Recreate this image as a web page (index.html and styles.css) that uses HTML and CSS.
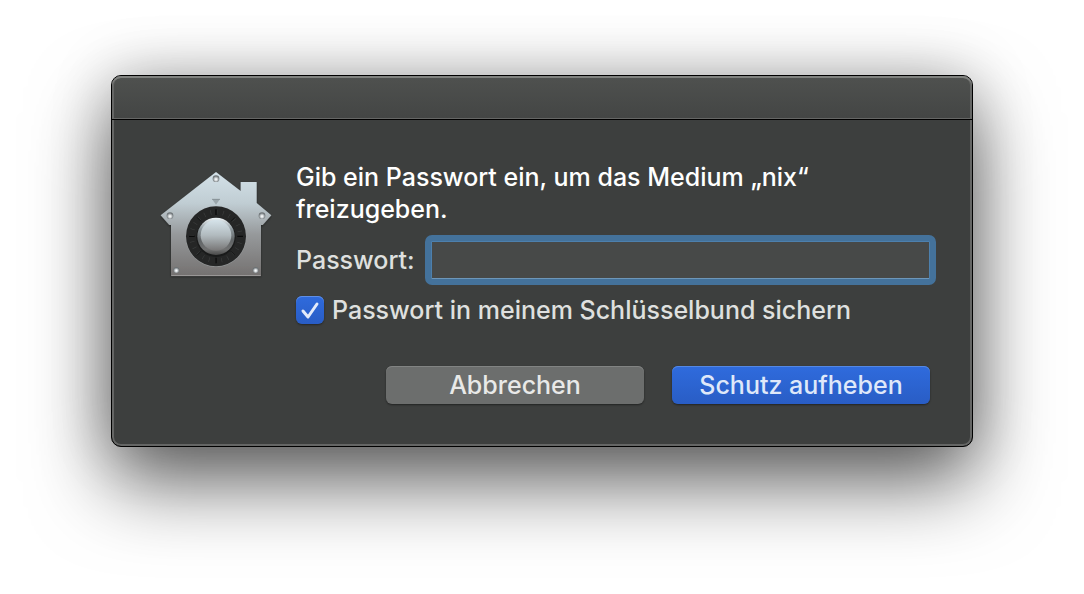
FILE: index.html
```html
<!DOCTYPE html>
<html lang="de">
<head>
<meta charset="utf-8">
<meta name="viewport" content="width=device-width, initial-scale=1">
<title>Passwort eingeben</title>
<link rel="stylesheet" href="styles.css">
</head>
<body>
<main class="dialog" role="dialog" aria-labelledby="prompt">
  <header class="titlebar"></header>
  <form class="content">
    <svg class="vault" viewBox="30 30 336 330" aria-hidden="true">
      <defs>
        <linearGradient id="metal" x1="0" y1="0" x2="0" y2="1">
          <stop offset="0" stop-color="#d3e1e8"/>
          <stop offset=".3" stop-color="#c0cdd3"/>
          <stop offset=".6" stop-color="#96999b"/>
          <stop offset="1" stop-color="#747170"/>
        </linearGradient>
        <linearGradient id="knob" x1="0" y1="0" x2="0" y2="1">
          <stop offset="0" stop-color="#d5e3ea"/>
          <stop offset=".5" stop-color="#b1babe"/>
          <stop offset="1" stop-color="#777676"/>
        </linearGradient>
        <linearGradient id="rim" x1="0" y1="0" x2="0" y2="1">
          <stop offset="0" stop-color="#f0f6f9"/>
          <stop offset=".3" stop-color="#8e989d"/>
          <stop offset=".6" stop-color="#606466"/>
          <stop offset=".85" stop-color="#707171"/>
          <stop offset="1" stop-color="#494949"/>
        </linearGradient>
        <radialGradient id="screw" cx=".5" cy=".6" r=".5">
          <stop offset="0" stop-color="#ffffff"/>
          <stop offset=".35" stop-color="#dfe3e5"/>
          <stop offset=".8" stop-color="#8d9396"/>
          <stop offset="1" stop-color="#6c7275"/>
        </radialGradient>
        <filter id="soft" x="-10%" y="-10%" width="120%" height="120%">
          <feDropShadow dx="0" dy="3" stdDeviation="3" flood-opacity=".45"/>
        </filter>
      </defs>
      <path filter="url(#soft)" fill="url(#metal)" d="M198 36 272 93V66H320V129L364 166 338 195H333V348H63V195H58L32 166Z"/>
      <path fill="none" stroke="#b5b5b5" stroke-width="2" d="M64 347H332"/>
      <path fill="#9aa6ab" d="M186 117H210L198 134Z"/>
      <path fill="none" stroke="#7d888d" stroke-width="2" d="M186 118H210"/>
      <circle cx="198" cy="230" r="91" fill="#b0b5b7" opacity=".45"/>
      <circle cx="198" cy="229" r="90" fill="#252626"/>
      <circle cx="198" cy="229" r="73" fill="none" stroke="#3b3d3d" stroke-width="14" stroke-dasharray="2 17.11"/>
      <g stroke="#090a0a" stroke-width="4">
        <path d="M198 148V165M198 293V310M117 229H134M262 229H279"/>
        <path stroke-width="2" d="M141 172 153 184M255 172 243 184M141 286 153 274M255 286 243 274"/>
      </g>
      <circle cx="198" cy="232" r="59" fill="#191a1a"/>
      <circle cx="198" cy="229" r="56" fill="url(#rim)"/>
      <circle cx="198" cy="226" r="46" fill="url(#knob)"/>
      <g fill="url(#screw)">
        <circle cx="198" cy="56" r="10"/>
        <circle cx="60" cy="167" r="10"/>
        <circle cx="336" cy="167" r="10"/>
        <circle cx="79" cy="330" r="9"/>
        <circle cx="317" cy="330" r="9"/>
      </g>
    </svg>
    <div class="fields">
      <p class="prompt" id="prompt">Gib ein Passwort ein, um das Medium „nix“ freizugeben.</p>
      <div class="password-row">
        <label for="password">Passwort:</label>
        <input class="password" id="password" type="password">
      </div>
      <div class="save-row">
        <span class="tick">
          <input class="tick-box" id="save" type="checkbox" checked>
          <svg class="tick-mark" viewBox="0 0 28 28" aria-hidden="true"><path d="M7 15 12 21 21 8"/></svg>
        </span>
        <label for="save">Passwort in meinem Schlüsselbund sichern</label>
      </div>
      <div class="actions">
        <button class="button" type="button">Abbrechen</button>
        <button class="button button-default" type="submit">Schutz aufheben</button>
      </div>
    </div>
  </form>
</main>
</body>
</html>
```
FILE: styles.css
```css
* {
  box-sizing: border-box;
}

body {
  min-height: 100vh;
  margin: 0;
  padding: 75px 111px;
  background: #fff;
  color: #dfe0df;
  font-family: Inter, "Liberation Sans", sans-serif;
  font-size: 25px;
  font-weight: 500;
  line-height: 32px;
}

.dialog {
  border: 1px solid #000;
  border-radius: 10px;
  background: #3d3f3e;
  box-shadow:
    inset 0 0 0 2px #656665,
    0 36px 80px rgba(0, 0, 0, .6),
    0 0 60px rgba(0, 0, 0, .22);
}

.titlebar {
  height: 44px;
  border-radius: 9px 9px 0 0;
  background: linear-gradient(#4f514f, #434544);
  box-shadow:
    inset 0 -1px #000,
    inset 0 2px #80827f,
    inset 0 0 0 2px #656665;
}

.content {
  display: flex;
  align-items: flex-start;
  gap: 24px;
  padding: 41px 42px 42px 48px;
}

.vault {
  flex: none;
  width: 112px;
  height: 110px;
  margin-top: 9px;
}

.fields {
  flex: 1;
  min-width: 0;
}

.prompt {
  margin: 0 0 16px;
  color: #fff;
}

.password-row {
  display: flex;
  align-items: center;
  gap: 16px;
}

.password {
  flex: 1;
  min-width: 0;
  height: 38px;
  padding: 0 8px;
  border: 1px solid #4d80ad;
  border-bottom-color: #6d96b9;
  border-radius: 1px;
  outline: 6px solid #44729b;
  background: #474948;
  color: #fff;
  font: inherit;
}

.save-row {
  display: flex;
  align-items: center;
  gap: 8px;
  margin-top: 15px;
}

.tick {
  display: grid;
  width: 28px;
  height: 28px;
}

.tick-box,
.tick-mark {
  grid-area: 1 / 1;
  width: 28px;
  height: 28px;
  margin: 0;
}

.tick-box {
  appearance: none;
  border-radius: 6px;
  background: linear-gradient(#2f6bdd, #295dc5);
  box-shadow: inset 0 1px #5f8fe6, 0 1px 2px rgba(0, 0, 0, .4);
}

.tick-mark {
  fill: none;
  stroke: #e4ebfa;
  stroke-width: 3;
  stroke-linecap: round;
  stroke-linejoin: round;
  pointer-events: none;
}

.tick-box:not(:checked) + .tick-mark {
  visibility: hidden;
}

.actions {
  display: flex;
  justify-content: flex-end;
  gap: 28px;
  margin-top: 40px;
}

.button {
  width: 258px;
  height: 38px;
  padding: 0;
  border: 0;
  border-radius: 6px;
  background: #6c6e6d;
  box-shadow: inset 0 1px #828483, 0 1px 2px rgba(0, 0, 0, .45);
  color: #e8e9e8;
  font: inherit;
}

.button-default {
  background: linear-gradient(#2f6bdd, #295dc5);
  box-shadow: inset 0 1px #5488e4, 0 1px 2px rgba(0, 0, 0, .45);
  color: #dfe8f9;
}
```
